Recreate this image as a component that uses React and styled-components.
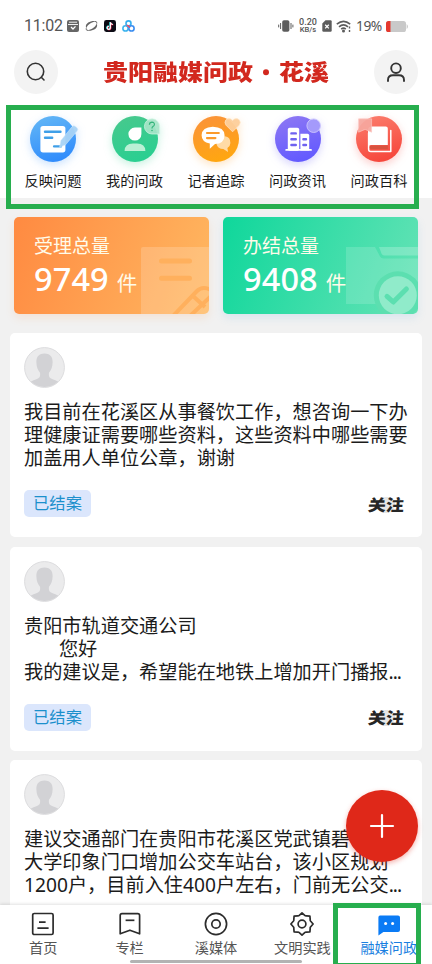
import React from 'react';
import styled, { createGlobalStyle } from 'styled-components';

const menus = [
    { name: '反映问题', icon: <WriteIcon />, shadow: '#3f97fb' },
    { name: '我的问政', icon: <MineIcon />, shadow: '#2fcf8f' },
    { name: '记者追踪', icon: <TrackIcon />, shadow: '#ff9a1f' },
    { name: '问政资讯', icon: <NewsIcon />, shadow: '#6a5df2' },
    { name: '问政百科', icon: <BookIcon />, shadow: '#f4493e' },
];

const posts = [
    {
        id: 1,
        text: '我目前在花溪区从事餐饮工作，想咨询一下办\n理健康证需要哪些资料，这些资料中哪些需要\n加盖用人单位公章，谢谢',
        status: '已结案',
    },
    {
        id: 2,
        text: '贵阳市轨道交通公司\n       您好\n我的建议是，希望能在地铁上增加开门播报',
        more: true,
        status: '已结案',
    },
    {
        id: 3,
        text: '建议交通部门在贵阳市花溪区党武镇碧桂园\n大学印象门口增加公交车站台，该小区规划\n1200户，目前入住400户左右，门前无公交',
        more: true,
    },
];

const tabs = [
    { name: '首页', icon: <HomeIcon /> },
    { name: '专栏', icon: <ColumnIcon /> },
    { name: '溪媒体', icon: <MediaIcon /> },
    { name: '文明实践', icon: <GearIcon /> },
    { name: '融媒问政', icon: <ChatIcon />, active: true },
];

function App() {
    return (
        <StScreen>
            <GlobalStyle />
            <StatusBar />
            <StHeader>
                <StRoundButton>
                    <svg width="22" height="22" viewBox="0 0 22 22" fill="none" stroke="#333" strokeWidth="1.6" strokeLinecap="round">
                        <circle cx="10.5" cy="10.5" r="8.2" />
                        <path d="M16.3 16.3 L19 19" />
                    </svg>
                </StRoundButton>
                <StTitle>
                    <span>贵阳融媒问政</span>
                    <StTitleDot />
                    <span>花溪</span>
                </StTitle>
                <StRoundButton>
                    <svg width="22" height="22" viewBox="0 0 22 22" fill="none" stroke="#333" strokeWidth="1.9" strokeLinecap="round">
                        <circle cx="11" cy="7.2" r="4.8" />
                        <path d="M3 20 V19 Q3 14.3 8 14.3 H14 Q19 14.3 19 19 V20" />
                    </svg>
                </StRoundButton>
            </StHeader>

            <StMenu>
                {menus.map((menu) => (
                    <StMenuItem key={menu.name} $shadow={menu.shadow}>
                        {menu.icon}
                        <span>{menu.name}</span>
                    </StMenuItem>
                ))}
            </StMenu>

            <StStats>
                <StStatCard $from="#ff8a41" $to="#ffb861" $glow="rgba(255, 150, 70, 0.15)">
                    <StStatDeco><PaperDeco /></StStatDeco>
                    <StStatLabel>受理总量</StStatLabel>
                    <StStatValue><strong>9749</strong>件</StStatValue>
                </StStatCard>
                <StStatCard $from="#0fd79b" $to="#66e3b6" $glow="rgba(90, 170, 230, 0.15)">
                    <StStatDeco><FolderDeco /></StStatDeco>
                    <StStatLabel>办结总量</StStatLabel>
                    <StStatValue><strong>9408</strong>件</StStatValue>
                </StStatCard>
            </StStats>

            <StList>
                {posts.map((post) => (
                    <StPost key={post.id}>
                        <Avatar />
                        <StPostText>
                            {post.text}
                            {post.more && <StMore>...</StMore>}
                        </StPostText>
                        {post.status && (
                            <StPostFooter>
                                <StTag>{post.status}</StTag>
                                <StFollow>关注</StFollow>
                            </StPostFooter>
                        )}
                    </StPost>
                ))}
            </StList>

            <StTabBar>
                {tabs.map((tab) => (
                    <StTab key={tab.name} $active={tab.active}>
                        {tab.icon}
                        <span>{tab.name}</span>
                    </StTab>
                ))}
                <StHomeIndicator />
            </StTabBar>

            <StAddButton>
                <svg width="26" height="26" viewBox="0 0 26 26" stroke="#fff" strokeWidth="2.2" strokeLinecap="round">
                    <path d="M13 2 V24 M2 13 H24" />
                </svg>
            </StAddButton>

            <StMark $left={6} $top={105} $width={413} $height={104} />
            <StMark $left={333} $top={903} $width={88} $height={65} />
        </StScreen>
    );
}

export default App;

function StatusBar() {
    return (
        <StStatusBar>
            <StClock>11:02</StClock>
            <StStatusIcons>
                <svg width="12" height="12" viewBox="0 0 12 12">
                    <rect width="12" height="12" rx="2" fill="#666" />
                    <path d="M2 2.2 H10 M1 4.5 H11" stroke="#fff" strokeWidth="0.9" />
                    <path d="M4 7 L6 9 L8.5 6.4" fill="none" stroke="#fff" strokeWidth="1.3" />
                </svg>
                <svg width="13" height="12" viewBox="0 0 13 12" fill="#666">
                    <path d="M1.2 8.2 C-0.6 3.6 5 0 11.6 1.2 C7.6 1.8 3 3.6 1.2 8.2 Z" />
                    <path d="M11.8 3.6 C13.6 8.2 8 11.8 1.4 10.6 C5.4 10 10 8.2 11.8 3.6 Z" />
                    <path d="M1.2 8.2 Q0.6 10.4 3 10.4 M11.8 3.6 Q12.4 1.4 10 1.4" fill="none" stroke="#666" strokeWidth="0.9" />
                </svg>
                <svg width="12" height="12" viewBox="0 0 12 12">
                    <rect width="12" height="12" rx="2.4" fill="#0b0a14" />
                    <path d="M6.4 2.2 V7.8 A1.6 1.6 0 1 1 4.9 6.2 M6.4 2.4 Q6.9 4.4 8.9 4.5" fill="none" stroke="#25f4ee" strokeWidth="1.3" transform="translate(-.4 -.2)" />
                    <path d="M6.4 2.2 V7.8 A1.6 1.6 0 1 1 4.9 6.2 M6.4 2.4 Q6.9 4.4 8.9 4.5" fill="none" stroke="#fe2c55" strokeWidth="1.3" transform="translate(.4 .3)" />
                    <path d="M6.4 2.2 V7.8 A1.6 1.6 0 1 1 4.9 6.2 M6.4 2.4 Q6.9 4.4 8.9 4.5" fill="none" stroke="#fff" strokeWidth="1.1" />
                </svg>
                <svg width="13" height="12" viewBox="0 0 13 12" fill="none" strokeWidth="1.6">
                    <circle cx="6.5" cy="3.4" r="2.5" stroke="#35aef0" />
                    <circle cx="3.5" cy="8.4" r="2.6" stroke="#3cb4ee" />
                    <circle cx="9.5" cy="8.4" r="2.6" stroke="#3b8df0" />
                    <path d="M4.6 5.6 Q6.6 5.2 7.8 7.6" stroke="#ee4a6b" />
                </svg>
            </StStatusIcons>
            <StStatusRight>
                <svg width="16" height="12" viewBox="0 0 16 12">
                    <rect x="4.2" y="0.2" width="7.2" height="11.6" rx="1.8" fill="#5c5c5c" />
                    <path d="M2.6 3 V9 M0.7 4.6 V7.4 M13 3 V9 M14.9 4.6 V7.4" stroke="#5c5c5c" strokeWidth="1" />
                </svg>
                <StSpeed><span>0.20</span><small>KB/s</small></StSpeed>
                <svg width="10" height="12" viewBox="0 0 10 12">
                    <path d="M3.5 0.3 H8.5 Q9.7 0.3 9.7 1.5 V10.5 Q9.7 11.7 8.5 11.7 H1.5 Q0.3 11.7 0.3 10.5 V3.5 Z" fill="#5c5c5c" />
                    <path d="M3.2 4.8 L6.8 8.4 M6.8 4.8 L3.2 8.4" stroke="#fff" strokeWidth="1.3" />
                </svg>
                <svg width="16" height="13" viewBox="0 0 16 13" fill="none" stroke="#5c5c5c" strokeWidth="1.6">
                    <path d="M0.8 4.2 Q7.5 -1.4 14.2 4.2" />
                    <path d="M3 6.8 Q7.5 3 12 6.8" />
                    <path d="M5.2 9.2 Q7.5 7.2 9.8 9.2" />
                    <circle cx="7.5" cy="11.1" r="0.7" fill="#5c5c5c" />
                    <path d="M13.5 6.5 V8.5 M13.5 10 V12" strokeWidth="1.4" />
                </svg>
                <StPercent>19%</StPercent>
                <svg width="22" height="11" viewBox="0 0 22 11">
                    <rect width="20" height="11" rx="2.6" fill="#c9c9c9" />
                    <path d="M20.6 3 Q22 4 22 5.5 Q22 7 20.6 8 Z" fill="#c9c9c9" />
                    <path d="M4.5 0 H2.6 Q0 0 0 2.6 V8.4 Q0 11 2.6 11 H4.5 Z" fill="#e5392f" />
                </svg>
            </StStatusRight>
        </StStatusBar>
    );
}

function Disc({ id, from, to }) {
    return (
        <>
            <defs>
                <linearGradient id={id} x1="0.3" y1="0" x2="0.6" y2="1">
                    <stop offset="0" stopColor={from} />
                    <stop offset="1" stopColor={to} />
                </linearGradient>
            </defs>
            <circle r="23" fill={`url(#${id})`} />
        </>
    );
}

function WriteIcon() {
    return (
        <svg viewBox="-25 -25 50 50">
            <Disc id="disc-write" from="#61b5f6" to="#2f8bfc" />
            <rect x="-12.6" y="-13" width="25" height="26.4" rx="2.6" fill="#fff" />
            <path d="M-8 -7.3 H7.5 M-8 -1.3 H-0.8" stroke="#3f9fe8" strokeWidth="2.4" strokeLinecap="round" />
            <path d="M1 7.4 H8" stroke="#3f9fe8" strokeWidth="2.2" strokeLinecap="round" />
            <path d="M19 -12.2 Q20.6 -14 22.4 -12.6 L24 -11.2 Q25.6 -9.8 24.2 -8 L12.6 5.8 L6.6 8.3 L7.8 1.6 Z" fill="#a8d3f6" fillOpacity="0.95" stroke="#d4eafc" strokeWidth="0.5" />
        </svg>
    );
}

function MineIcon() {
    return (
        <svg viewBox="-25 -25 50 50">
            <Disc id="disc-mine" from="#46c98d" to="#29cf91" />
            <path d="M6.4 -11.4 V-5 A6.5 6.5 0 1 1 0 -11.4 Z" fill="#fff" />
            <path d="M-10.4 12 Q-10.4 4.4 -2 4.4 H2 Q10.4 4.4 10.4 12 Z" fill="#baf0d5" />
            <path d="M24.6 -5 H17 A7.6 7.6 0 1 1 24.6 -12.4 Z" fill="#a9e5c9" fillOpacity="0.9" stroke="#d7f5e6" strokeWidth="0.7" />
            <path d="M14.4 -14.2 Q14.6 -16.8 17 -16.8 Q19.5 -16.7 19.4 -14.5 Q19.3 -13.2 17.9 -12.4 Q17 -11.8 17 -10.6" fill="none" stroke="#35b57c" strokeWidth="1.2" />
            <circle cx="17" cy="-8.5" r="0.8" fill="#35b57c" />
        </svg>
    );
}

function TrackIcon() {
    return (
        <svg viewBox="-25 -25 50 50">
            <Disc id="disc-track" from="#fb9338" to="#ffa70f" />
            <path d="M2 2 Q4 -3 9 -2.8 Q14.5 -2 14.4 4 Q14.2 7.6 11.4 9 L12 13 L7.4 10 Q1.6 9.6 0.6 5.4 Z" fill="#ffdba6" />
            <path d="M-3.2 -12.2 Q8.4 -11.8 8.6 -3.6 Q8.2 4.6 -1 5 L-6.2 9.8 V4.6 Q-14.4 2.8 -14.4 -3.8 Q-14 -11.8 -3.2 -12.2 Z" fill="#fff" />
            <path d="M-9 -6 H2.8 M-9 -0.9 H-0.6" stroke="#fb9a2c" strokeWidth="2.2" strokeLinecap="round" />
            <path d="M16.6 -7.2 L10 -13.8 Q8 -16.6 9.8 -19 Q13.2 -22 16.6 -18.6 Q20 -22 23.4 -19 Q25.2 -16.6 23.2 -13.8 Z" fill="#fdcf9b" fillOpacity="0.95" stroke="#ffe6c8" strokeWidth="0.7" />
        </svg>
    );
}

function NewsIcon() {
    return (
        <svg viewBox="-25 -25 50 50">
            <Disc id="disc-news" from="#8b76f4" to="#6259ff" />
            <rect x="-10.2" y="-11.2" width="11.4" height="23" rx="1.8" fill="#fff" />
            <path d="M2.4 11.5 V-5.2 H9.6 Q11.2 -5.2 11.2 -3.6 V11.5 Z" fill="#fff" />
            <path d="M-11.8 10.9 H13" stroke="#fff" strokeWidth="1.8" strokeLinecap="round" />
            <path d="M-6.6 -5.6 H-2.2 M-6.6 0.3 H-2.2 M-6.6 6 H-2.2 M5.4 0.3 H8 M5.4 6 H8" stroke="#6f62f0" strokeWidth="2.4" strokeLinecap="round" />
            <circle cx="15.7" cy="-13.3" r="6.8" fill="#a49afb" stroke="#cdc7fd" strokeWidth="0.9" />
        </svg>
    );
}

function BookIcon() {
    return (
        <svg viewBox="-25 -25 50 50">
            <Disc id="disc-book" from="#fb7a6a" to="#f6463b" />
            <path d="M-10.4 -6 V10.3 Q-10.4 12.6 -8.2 12.6 H11.8 V-8.6" fill="none" stroke="#fff" strokeWidth="1.5" strokeLinecap="round" strokeLinejoin="round" />
            <path d="M-11 8 V-8.6 Q-11 -12.4 -7.4 -12.4 H6.8 Q8.8 -12.4 8.8 -10.4 V6 H-8 Q-10 6 -11 8 Z" fill="#fff" />
            <path d="M8.8 6.4 V10.2 H-7.8 Q-9.2 10 -9.2 8.2 Q-9.2 6.6 -7.8 6.4 Z" fill="#d8533f" />
            <path d="M-20.4 -20.2 H-7.4 V-6.8 L-13.9 -9.6 L-20.4 -6.8 Z" fill="#f6a79e" fillOpacity="0.92" stroke="#fbcac4" strokeWidth="0.6" />
        </svg>
    );
}

function PaperDeco() {
    return (
        <svg width="68" height="67" viewBox="0 0 68 67" fill="none">
            <path d="M0 67 V2 Q0 0 2 0 H68 V67 Z" fill="#fff" fillOpacity="0.18" />
            <path d="M20.5 14 H48.5 M20.5 31.2 H48.5" stroke="#ffb05d" strokeWidth="5" strokeLinecap="round" />
            <path d="M32 69 L56 44 Q61.5 38.5 70 43 M49 69 L70 49 M52 49 L64 60" stroke="#ffb05d" strokeWidth="4" />
        </svg>
    );
}

function FolderDeco() {
    return (
        <svg width="72" height="67" viewBox="0 0 72 67" fill="none">
            <path d="M0 57 V0 H29 L34 9.4 Q35.2 11.4 37.6 11.4 H72 V57 Z" fill="#fff" fillOpacity="0.15" />
            <path d="M33 0 H72 V8.4 H38 Q36.4 8.4 35.6 6.8 Z" fill="#fff" fillOpacity="0.22" />
            <circle cx="51.8" cy="48.3" r="24" fill="#5cdfb0" />
            <circle cx="51.8" cy="48.3" r="19" fill="#90ebca" />
            <path d="M41 49.4 L47.3 55 L60.4 42" stroke="#5cdfb0" strokeWidth="5" strokeLinecap="round" strokeLinejoin="round" />
        </svg>
    );
}

function Avatar() {
    return (
        <StAvatar viewBox="0 0 41 41">
            <defs>
                <clipPath id="avatar-clip"><circle cx="20.5" cy="20.5" r="19.6" /></clipPath>
            </defs>
            <circle cx="20.5" cy="20.5" r="19.9" fill="#ebebec" stroke="#dcdcde" strokeWidth="1" />
            <path clipPath="url(#avatar-clip)" d="M20.5 6.6 C26 6.6 28.9 10 28.6 15.6 C28.4 20.4 27.4 23 25 25.8 C24.6 28.6 25 30.6 27 31.6 C30 33 33 33.4 35.4 35.6 L34 41 H7 L5.6 35.6 C8 33.4 11 33 14 31.6 C16 30.6 16.4 28.6 16 25.8 C13.6 23 12.6 20.4 12.4 15.6 C12.1 10 15 6.6 20.5 6.6 Z" fill="#d2d2d5" />
        </StAvatar>
    );
}

function HomeIcon() {
    return (
        <svg viewBox="0 0 24 24" fill="none" stroke="#2c2c2c" strokeWidth="1.7">
            <rect x="1.7" y="1.5" width="20.4" height="21" rx="1.6" />
            <path d="M8 10.2 H14.6 M6.4 16.2 H17.6" />
        </svg>
    );
}

function ColumnIcon() {
    return (
        <svg viewBox="0 0 24 24" fill="none" stroke="#2c2c2c" strokeWidth="1.7" strokeLinejoin="round">
            <path d="M4 1.6 H19.8 Q21.6 1.6 21.6 3.4 V21.8 L11.9 18.2 L2.2 21.8 V3.4 Q2.2 1.6 4 1.6 Z" />
            <path d="M7.6 8.3 H16.4" />
        </svg>
    );
}

function MediaIcon() {
    return (
        <svg viewBox="0 0 24 24" fill="none" stroke="#2c2c2c" strokeWidth="1.7">
            <circle cx="12" cy="12" r="10.6" />
            <circle cx="12" cy="12" r="4.2" />
        </svg>
    );
}

function GearIcon() {
    return (
        <svg viewBox="0 0 24 24" fill="none" stroke="#2c2c2c" strokeWidth="1.7" strokeLinejoin="round">
            <path d="M12 0.9 L15 3.6 Q15.7 4.1 16.5 3.8 L19.9 4.1 L20.2 7.5 Q20 8.3 20.5 9 L23.1 12 L20.5 15 Q20 15.7 20.2 16.5 L19.9 19.9 L16.5 20.2 Q15.7 19.9 15 20.4 L12 23.1 L9 20.4 Q8.3 19.9 7.5 20.2 L4.1 19.9 L3.8 16.5 Q4 15.7 3.5 15 L0.9 12 L3.5 9 Q4 8.3 3.8 7.5 L4.1 4.1 L7.5 3.8 Q8.3 4.1 9 3.6 Z" />
            <circle cx="12" cy="12" r="3.9" />
        </svg>
    );
}

function ChatIcon() {
    return (
        <svg viewBox="0 0 24 24">
            <path d="M3 3.4 H21 Q23 3.4 23 5.4 V18 Q23 20 21 20 H6.4 L1.4 23.6 V5.4 Q1.4 3.4 3 3.4 Z" fill="#0a7bf5" />
            <circle cx="8.6" cy="11.6" r="1.5" fill="#fff" />
            <circle cx="15.6" cy="11.6" r="1.5" fill="#fff" />
        </svg>
    );
}

const GlobalStyle = createGlobalStyle`
    * {
        box-sizing : border-box;
    }
    body {
        margin : 0;
        background : #fff;
    }
    svg {
        display : block;
        flex : none;
    }
`
const StScreen = styled.div`
    position : relative;
    display : flex;
    flex-direction : column;
    width : 432px;
    height : 964px;
    overflow : hidden;
    background : #f1f1f1;
    font-family : 'Noto Sans', 'Noto Sans CJK SC', sans-serif;
    color : #1b1b1b;
`
const StStatusBar = styled.div`
    display : flex;
    align-items : center;
    height : 50px;
    padding : 2px 24px 0;
    background : #fff;
    color : #555;
`
const StClock = styled.span`
    width : 43px;
    font-family : Roboto, sans-serif;
    font-size : 16px;
    line-height : 20px;
    letter-spacing : -0.2px;
`
const StStatusIcons = styled.div`
    display : flex;
    gap : 6px;
`
const StStatusRight = styled.div`
    display : flex;
    align-items : center;
    gap : 4px;
    margin-left : auto;
`
const StSpeed = styled.div`
    display : flex;
    flex-direction : column;
    align-items : center;
    width : 20px;
    font-family : Roboto, sans-serif;
    font-size : 9px;
    font-weight : 500;
    line-height : 8px;

    small {
        font-size : 7.6px;
    }
`
const StPercent = styled.span`
    width : 26px;
    font-size : 13.8px;
    line-height : 16px;
    letter-spacing : -0.5px;
`
const StHeader = styled.header`
    display : flex;
    align-items : center;
    justify-content : space-between;
    height : 44px;
    padding : 0 14px;
    background : #fff;
`
const StRoundButton = styled.button`
    display : flex;
    align-items : center;
    justify-content : center;
    width : 44px;
    height : 44px;
    padding : 0;
    border : none;
    border-radius : 50%;
    background : #f3f3f3;
`
const StTitle = styled.h1`
    display : flex;
    align-items : center;
    margin : 0 0 3px;
    color : #d2281e;
    font-family : 'Noto Sans CJK SC', sans-serif;
    font-size : 25px;
    font-weight : 900;
    line-height : 30px;
    transform : scaleY(0.86);
`
const StTitleDot = styled.i`
    width : 6px;
    height : 7px;
    margin : 2px 10px 0;
    border-radius : 50%;
    background : #d2281e;
`
const StMenu = styled.nav`
    display : grid;
    grid-template-columns : repeat(5, 81.5px);
    justify-content : center;
    height : 104px;
    padding-top : 20px;
    background : #fff;
`
const StMenuItem = styled.div`
    display : flex;
    flex-direction : column;
    align-items : center;
    font-size : 14.2px;
    line-height : 20px;

    svg {
        width : 50px;
        height : 50px;
        margin-bottom : 7px;
        overflow : visible;
        filter : drop-shadow(0 3px 4px ${(props) => props.$shadow}44);
    }
`
const StStats = styled.section`
    display : grid;
    grid-template-columns : 195px 195px;
    gap : 14px;
    padding : 19px 14px;
`
const StStatCard = styled.div`
    position : relative;
    height : 97px;
    padding : 15px 20px 0;
    overflow : hidden;
    border-radius : 5px;
    background : linear-gradient(110deg, ${(props) => props.$from}, ${(props) => props.$to});
    box-shadow : 0 4px 8px ${(props) => props.$glow};
    color : #fffbe9;
`
const StStatDeco = styled.div`
    position : absolute;
    right : 0;
    bottom : 0;
`
const StStatLabel = styled.div`
    position : relative;
    font-size : 19px;
    line-height : 28px;
`
const StStatValue = styled.div`
    position : relative;
    display : flex;
    align-items : baseline;
    gap : 8px;
    font-size : 20.5px;
    line-height : 38px;

    strong {
        font-size : 32.5px;
        font-weight : 500;
        letter-spacing : 0.1px;
        color : #fff;
    }
`
const StList = styled.main`
    display : flex;
    flex : 1;
    flex-direction : column;
    gap : 9.5px;
    min-height : 0;
    padding : 0 10px;
    overflow : hidden;
`
const StPost = styled.article`
    flex : none;
    height : 204.2px;
    padding : 14px;
    border-radius : 5px;
    background : #fff;
`
const StAvatar = styled.svg`
    width : 41px;
    height : 41px;
`
const StPostText = styled.p`
    height : 69px;
    margin : 13px 0 20px;
    font-size : 19.2px;
    line-height : 22.9px;
    white-space : pre;
`
const StMore = styled.span`
    letter-spacing : -1px;
`
const StPostFooter = styled.div`
    display : flex;
    align-items : center;
    justify-content : space-between;
    padding-right : 4px;
`
const StTag = styled.span`
    width : 67px;
    height : 27px;
    border-radius : 5px;
    background : #dbe6fc;
    color : #1b90cc;
    font-size : 16.3px;
    line-height : 27px;
    text-align : center;
`
const StFollow = styled.span`
    margin-top : 2px;
    background : radial-gradient(circle at 50% 50%, #e6e6e6 8.5px, transparent 9.5px);
    color : #262626;
    font-size : 18px;
    font-weight : 900;
    line-height : 20px;
    transform : skewX(-5deg) scaleY(0.9);
`
const StTabBar = styled.nav`
    position : relative;
    display : grid;
    grid-template-columns : repeat(5, 1fr);
    height : 59px;
    padding-top : 7px;
    background : #fff;
    box-shadow : 0 -1px 3px rgba(0, 0, 0, 0.12);
`
const StTab = styled.div`
    display : flex;
    flex-direction : column;
    align-items : center;
    gap : 3px;
    color : ${(props) => (props.$active ? '#1a7fe0' : '#555')};
    font-size : 14.2px;
    line-height : 18px;

    svg {
        width : 24px;
        height : 24px;
    }
`
const StHomeIndicator = styled.div`
    position : absolute;
    bottom : 1px;
    left : 130px;
    width : 172px;
    height : 3px;
    border-radius : 2px;
    background : #b3b3b3;
`
const StAddButton = styled.button`
    position : absolute;
    top : 790px;
    left : 346px;
    display : flex;
    align-items : center;
    justify-content : center;
    width : 72px;
    height : 72px;
    padding : 0;
    border : none;
    border-radius : 50%;
    background : #df2819;
    box-shadow : 0 2px 5px rgba(223, 40, 25, 0.35);
`
/* green frame drawn over the page */
const StMark = styled.div`
    position : absolute;
    top : ${(props) => props.$top}px;
    left : ${(props) => props.$left}px;
    width : ${(props) => props.$width}px;
    height : ${(props) => props.$height}px;
    border : 5px solid #27ae4e;
    pointer-events : none;
`
